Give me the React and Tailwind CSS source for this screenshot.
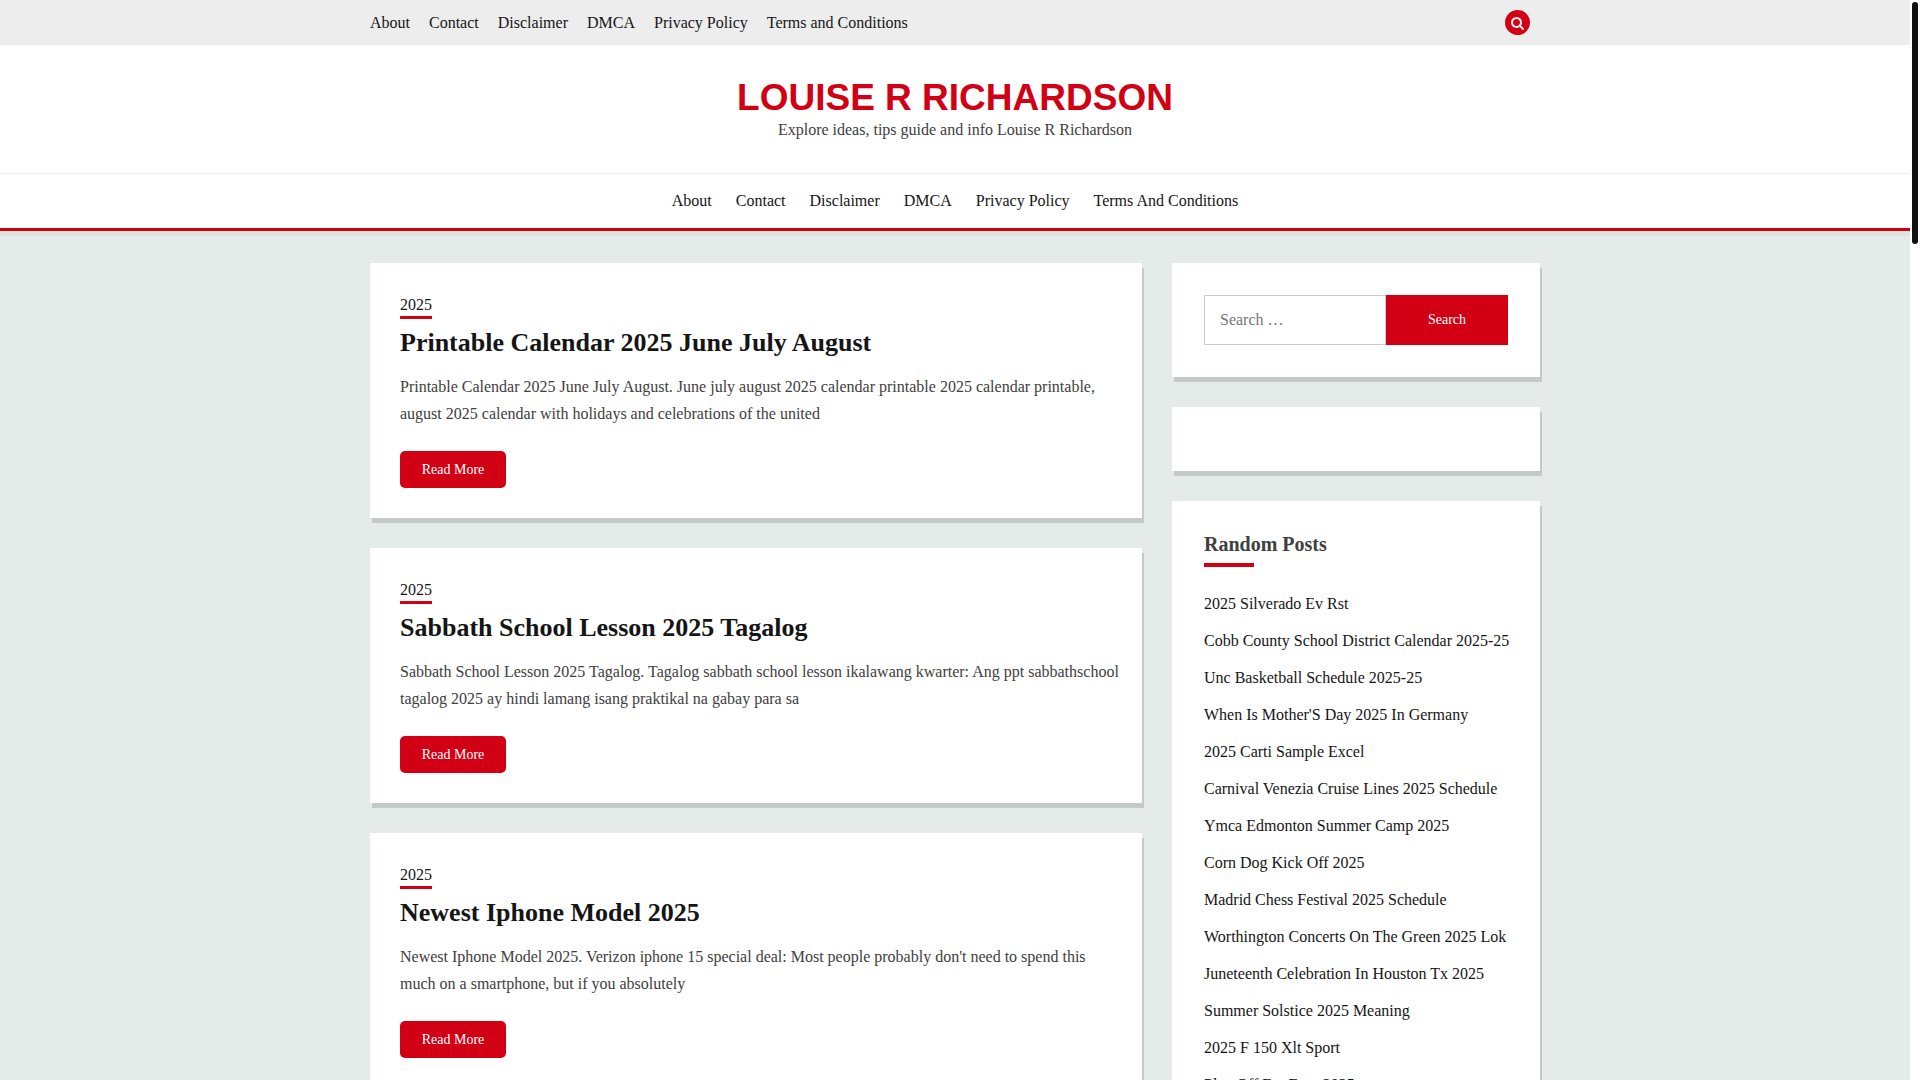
import { useState } from 'react';

const topLinks = ['About', 'Contact', 'Disclaimer', 'DMCA', 'Privacy Policy', 'Terms and Conditions'];
const mainLinks = ['About', 'Contact', 'Disclaimer', 'DMCA', 'Privacy Policy', 'Terms And Conditions'];

const posts = [
  {
    title: 'Printable Calendar 2025 June July August',
    text: 'Printable Calendar 2025 June July August. June july august 2025 calendar printable 2025 calendar printable,\naugust 2025 calendar with holidays and celebrations of the united',
  },
  {
    title: 'Sabbath School Lesson 2025 Tagalog',
    text: 'Sabbath School Lesson 2025 Tagalog. Tagalog sabbath school lesson ikalawang kwarter: Ang ppt sabbathschool\ntagalog 2025 ay hindi lamang isang praktikal na gabay para sa',
  },
  {
    title: 'Newest Iphone Model 2025',
    text: "Newest Iphone Model 2025. Verizon iphone 15 special deal: Most people probably don't need to spend this\nmuch on a smartphone, but if you absolutely",
  },
];

const randomPosts = [
  '2025 Silverado Ev Rst',
  'Cobb County School District Calendar 2025-25',
  'Unc Basketball Schedule 2025-25',
  "When Is Mother'S Day 2025 In Germany",
  '2025 Carti Sample Excel',
  'Carnival Venezia Cruise Lines 2025 Schedule',
  'Ymca Edmonton Summer Camp 2025',
  'Corn Dog Kick Off 2025',
  'Madrid Chess Festival 2025 Schedule',
  'Worthington Concerts On The Green 2025 Lok',
  'Juneteenth Celebration In Houston Tx 2025',
  'Summer Solstice 2025 Meaning',
  '2025 F 150 Xlt Sport',
  'Play Off For Four 2025',
];

const SearchIcon = () => (
  <svg className="h-[14px] w-[13px]" viewBox="0 0 1664 1792" fill="currentColor" aria-hidden="true">
    <path d="M1152 832q0-185-131.500-316.500T704 384 387.500 515.500 256 832t131.500 316.500T704 1280t316.500-131.500T1152 832zm512 832q0 52-38 90t-90 38q-54 0-90-38l-343-342q-179 124-399 124-143 0-273.500-55.500t-225-150-150-225T0 832t55.500-273.500 150-225 225-150T704 128t273.500 55.500 225 150 150 225T1408 832q0 220-124 399l343 343q37 37 37 90z" />
  </svg>
);

const Header = () => (
  <header className="bg-white">
    <div className="bg-[#ededed]">
      <div className="mx-auto flex h-[45px] max-w-[1170px] items-center justify-between">
        <nav aria-label="Top menu">
          <ul className="flex gap-[19px]">
            {topLinks.map((link) => (
              <li key={link}>
                <a href="#" className="hover:text-[#d20014]">{link}</a>
              </li>
            ))}
          </ul>
        </nav>
        <button
          className="mr-2.5 flex size-[25px] items-center justify-center rounded-full bg-[#d20014] text-[#ededed]"
          aria-label="Search"
        >
          <SearchIcon />
        </button>
      </div>
    </div>

    <div className="flex flex-col items-center pt-[33px] pb-[31px] text-center">
      <h1 className="font-['Liberation_Sans',sans-serif] text-[37px] leading-10 font-bold text-[#d20014]">
        <a href="#">LOUISE R RICHARDSON</a>
      </h1>
      <p className="leading-6 text-[#404040]">Explore ideas, tips guide and info Louise R Richardson</p>
    </div>

    <nav
      className="relative border-t border-b-[3px] border-t-[#ededed] border-b-[#d20014] shadow-[0_5px_0_#dde3e0]"
      aria-label="Main menu"
    >
      <ul className="flex h-[54px] items-center justify-center gap-6">
        {mainLinks.map((link) => (
          <li key={link}>
            <a href="#" className="hover:text-[#d20014]">{link}</a>
          </li>
        ))}
      </ul>
    </nav>
  </header>
);

const PostCard = ({ post }) => (
  <article className="bg-white p-[30px] shadow-[2px_5px_0_#c4cac8]">
    <a href="#" className="block w-fit border-b-[3px] border-[#d20014] leading-[23px]">
      2025
    </a>
    <h2 className="mt-1.5 text-[26px] leading-9 font-bold">
      <a href="#">{post.title}</a>
    </h2>
    <p className="mt-3 -mr-5 mb-6 leading-[27px] whitespace-pre-line text-[#404040]">{post.text}</p>
    <a
      href="#"
      className="flex h-[37px] w-[106px] items-center justify-center rounded-[5px] bg-[#d20014] text-sm text-white"
    >
      Read More
    </a>
  </article>
);

const Widget = ({ children }) => (
  <section className="bg-white p-8 shadow-[2px_5px_0_#c4cac8]">{children}</section>
);

const Sidebar = () => {
  const [query, setQuery] = useState('');

  return (
    <aside className="flex w-[368px] shrink-0 flex-col gap-[30px]">
      <Widget>
        <form className="flex h-[50px]" role="search" onSubmit={(e) => e.preventDefault()}>
          <input
            type="search"
            aria-label="Search for"
            placeholder="Search …"
            value={query}
            onChange={(e) => setQuery(e.target.value)}
            className="min-w-0 flex-1 border border-[#cccccc] px-[15px] outline-none placeholder:text-[#757575]"
          />
          <button type="submit" className="w-[122px] bg-[#d20014] text-sm text-white">
            Search
          </button>
        </form>
      </Widget>

      <Widget />

      <Widget>
        <h2 className="text-xl leading-[22px] font-bold text-[#404040]">Random Posts</h2>
        <div className="mt-2 h-1 w-[50px] bg-[#d20014]" />
        <ul className="mt-[23px] flex flex-col gap-2.5">
          {randomPosts.map((title) => (
            <li key={title} className="leading-[27px] whitespace-nowrap">
              <a href="#" className="hover:text-[#d20014]">{title}</a>
            </li>
          ))}
        </ul>
      </Widget>
    </aside>
  );
};

const App = () => (
  <div className="flex h-screen bg-white font-['Liberation_Serif',serif] text-base text-[#151515]">
    <div className="min-w-0 flex-1 overflow-y-auto bg-[#e5ebe9] [scrollbar-width:none]">
      <Header />
      <main className="mx-auto flex max-w-[1170px] items-start gap-[30px] py-8">
        <div className="flex min-w-0 flex-1 flex-col gap-[30px]">
          {posts.map((post) => (
            <PostCard key={post.title} post={post} />
          ))}
        </div>
        <Sidebar />
      </main>
    </div>
    <div className="w-2.5 p-0.5" aria-hidden="true">
      <div className="h-[242px] w-1.5 rounded-full bg-[#111111]" />
    </div>
  </div>
);

export default App;
